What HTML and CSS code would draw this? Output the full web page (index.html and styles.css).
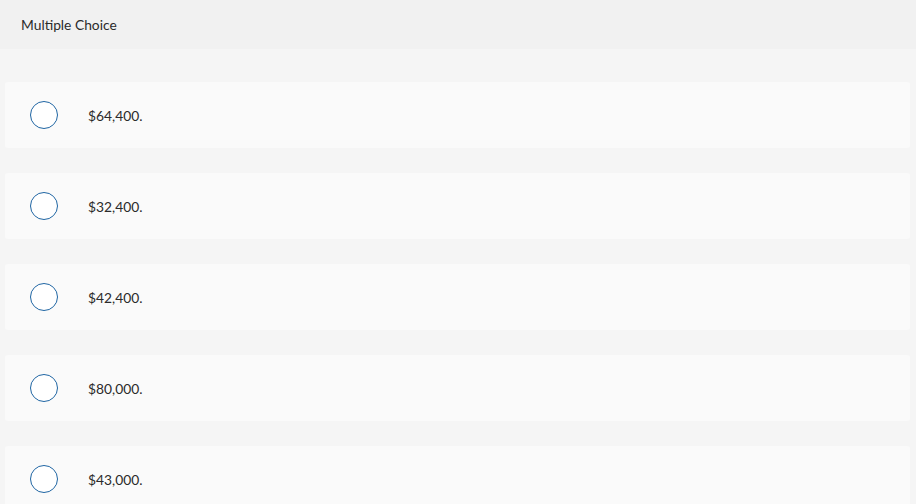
FILE: index.html
```html
<!DOCTYPE html>
<html lang="en">
<head>
  <meta charset="UTF-8">
  <title>Multiple Choice</title>
  <link rel="stylesheet" href="styles.css">
</head>
<body>
  <div class="question-header">Multiple Choice</div>

  <div class="choice-list">
    <label class="choice">
      <span class="radio"></span>
      <span class="choice-text">$64,400.</span>
    </label>
    <label class="choice">
      <span class="radio"></span>
      <span class="choice-text">$32,400.</span>
    </label>
    <label class="choice">
      <span class="radio"></span>
      <span class="choice-text">$42,400.</span>
    </label>
    <label class="choice">
      <span class="radio"></span>
      <span class="choice-text">$80,000.</span>
    </label>
    <label class="choice">
      <span class="radio"></span>
      <span class="choice-text">$43,000.</span>
    </label>
  </div>
</body>
</html>
```

FILE: styles.css
```css
body {
  margin: 0;
  background: #f5f5f5;
  font-family: Lato, "Liberation Sans", sans-serif;
  color: #2b2b2b;
}

.question-header {
  height: 49px;
  display: flex;
  align-items: center;
  padding-left: 21px;
  background: #f1f1f1;
  font-size: 13.8px;
}

.choice-list {
  display: flex;
  flex-direction: column;
  gap: 25px;
  padding: 33px 6px 0 5px;
}

.choice {
  height: 66px;
  display: flex;
  align-items: center;
  background: #fafafa;
  border-radius: 3px;
  cursor: pointer;
}

/* Empty radio circle */
.radio {
  box-sizing: border-box;
  width: 28px;
  height: 28px;
  margin-left: 25px;
  border: 1.5px solid #1f65a3;
  border-radius: 50%;
  background: #fff;
  flex-shrink: 0;
}

.choice-text {
  margin-left: 30px;
  font-size: 13.8px;
}
```
